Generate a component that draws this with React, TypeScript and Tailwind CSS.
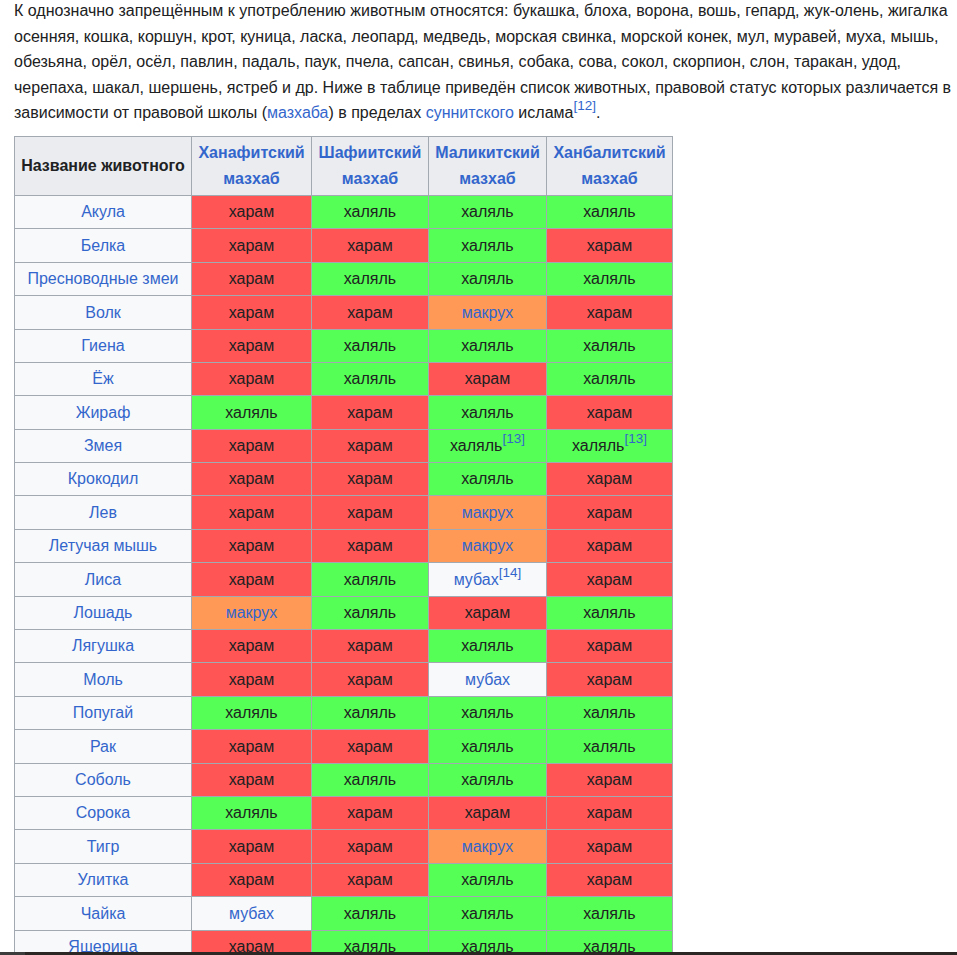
import React from "react";

// Статусы: цвет ячейки и признак ссылки
type Status = "харам" | "халяль" | "макрух" | "мубах";

const CELL: Record<Status, string> = {
  харам: "bg-[#ff5555] text-[#202122]",
  халяль: "bg-[#55ff55] text-[#202122]",
  макрух: "bg-[#ff9955] text-[#3366cc]",
  мубах: "bg-[#f8f9fa] text-[#3366cc]",
};

type Cell = Status | [Status, string];

const ROWS: [string, Cell[]][] = [
  ["Акула", ["харам", "халяль", "халяль", "халяль"]],
  ["Белка", ["харам", "харам", "халяль", "харам"]],
  ["Пресноводные змеи", ["харам", "халяль", "халяль", "халяль"]],
  ["Волк", ["харам", "харам", "макрух", "харам"]],
  ["Гиена", ["харам", "халяль", "халяль", "халяль"]],
  ["Ёж", ["харам", "халяль", "харам", "халяль"]],
  ["Жираф", ["халяль", "харам", "халяль", "харам"]],
  ["Змея", ["харам", "харам", ["халяль", "13"], ["халяль", "13"]]],
  ["Крокодил", ["харам", "харам", "халяль", "харам"]],
  ["Лев", ["харам", "харам", "макрух", "харам"]],
  ["Летучая мышь", ["харам", "харам", "макрух", "харам"]],
  ["Лиса", ["харам", "халяль", ["мубах", "14"], "харам"]],
  ["Лошадь", ["макрух", "халяль", "харам", "халяль"]],
  ["Лягушка", ["харам", "харам", "халяль", "харам"]],
  ["Моль", ["харам", "харам", "мубах", "харам"]],
  ["Попугай", ["халяль", "халяль", "халяль", "халяль"]],
  ["Рак", ["харам", "харам", "халяль", "халяль"]],
  ["Соболь", ["харам", "халяль", "халяль", "харам"]],
  ["Сорока", ["халяль", "харам", "харам", "харам"]],
  ["Тигр", ["харам", "харам", "макрух", "харам"]],
  ["Улитка", ["харам", "харам", "халяль", "харам"]],
  ["Чайка", ["мубах", "халяль", "халяль", "халяль"]],
  ["Ящерица", ["харам", "халяль", "халяль", "халяль"]],
];

const SCHOOLS = ["Ханафитский", "Шафиитский", "Маликитский", "Ханбалитский"];

function Ref({ n }: { n: string }) {
  return <sup className="relative -top-[0.6em] text-[13.5px] leading-none text-[#3366cc]">[{n}]</sup>;
}

export default function App() {
  return (
    <div className="min-h-screen bg-white px-[14px] text-[16px] leading-[25.6px] text-[#202122] font-['Liberation_Sans',Arial,sans-serif]">
      <p className="-mt-[2px] w-[938px]">
        К однозначно запрещённым к употреблению животным относятся: букашка, блоха, ворона, вошь, гепард, жук-олень, жигалка
        осенняя, кошка, коршун, крот, куница, ласка, леопард, медведь, морская свинка, морской конек, мул, муравей, муха, мышь,
        обезьяна, орёл, осёл, павлин, падаль, паук, пчела, сапсан, свинья, собака, сова, сокол, скорпион, слон, таракан, удод,
        черепаха, шакал, шершень, ястреб и др. Ниже в таблице приведён список животных, правовой статус которых различается в
        зависимости от правовой школы (<a className="text-[#3366cc]">мазхаба</a>) в пределах{" "}
        <a className="text-[#3366cc]">суннитского</a> ислама<Ref n="12" />.
      </p>

      <table className="mt-[10px] table-fixed border-collapse border border-[#a2a9b1] text-center">
        <colgroup>
          <col className="w-[177px]" />
          <col className="w-[120px]" />
          <col className="w-[117px]" />
          <col className="w-[118px]" />
          <col className="w-[126px]" />
        </colgroup>
        <thead>
          <tr className="h-[59px] bg-[#eaecf0]">
            <th className="border border-[#a2a9b1] px-[6px] font-bold">Название животного</th>
            {SCHOOLS.map((s) => (
              <th key={s} className="border border-[#a2a9b1] px-[4px] font-bold text-[#3366cc]">
                {s}
                <br />
                мазхаб
              </th>
            ))}
          </tr>
        </thead>
        <tbody>
          {ROWS.map(([name, cells]) => (
            <tr key={name} className="h-[33.4px]">
              <td className="border border-[#a2a9b1] bg-[#f8f9fa] px-[6px] py-0 text-[#3366cc]">{name}</td>
              {cells.map((c, i) => {
                const [st, ref] = Array.isArray(c) ? c : [c, ""];
                return (
                  <td key={i} className={`border border-[#a2a9b1] px-[4px] py-0 ${CELL[st]}`}>
                    {st}
                    {ref && <Ref n={ref} />}
                  </td>
                );
              })}
            </tr>
          ))}
        </tbody>
      </table>

      <div className="fixed bottom-0 left-0 right-0 flex h-[3px]">
        <div className="w-[25px] bg-[#3c3c3c]" />
        <div className="flex-1 bg-[#2b2724]" />
      </div>
    </div>
  );
}
